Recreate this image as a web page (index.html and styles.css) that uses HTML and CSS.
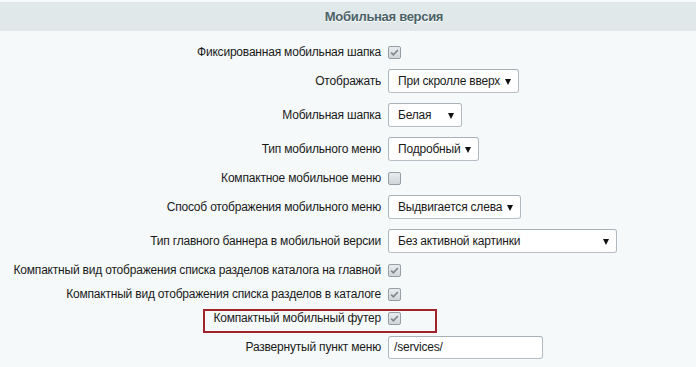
FILE: index.html
```html
<!DOCTYPE html>
<html lang="ru">

<head>
  <meta charset="UTF-8">
  <meta name="viewport" content="width=device-width, initial-scale=1.0">
  <title>Мобильная версия</title>
  <link rel="stylesheet" href="styles.css">
</head>

<body>
  <div class="section">
    <div class="heading">Мобильная версия</div>

    <div class="fields">
      <div class="row row-check">
        <label class="field-label">Фиксированная мобильная шапка</label>
        <div class="field-control">
          <span class="checkbox">
            <svg width="13" height="13" viewBox="0 0 13 13"><path d="M3.2 6.6 L5.4 8.8 L9.9 4" /></svg>
          </span>
        </div>
      </div>

      <div class="row">
        <label class="field-label">Отображать</label>
        <div class="field-control">
          <div class="select" style="width: 131px"><span>При скролле вверх</span></div>
        </div>
      </div>

      <div class="row">
        <label class="field-label">Мобильная шапка</label>
        <div class="field-control">
          <div class="select" style="width: 74px"><span>Белая</span></div>
        </div>
      </div>

      <div class="row">
        <label class="field-label">Тип мобильного меню</label>
        <div class="field-control">
          <div class="select" style="width: 91px"><span>Подробный</span></div>
        </div>
      </div>

      <div class="row row-check">
        <label class="field-label">Компактное мобильное меню</label>
        <div class="field-control">
          <span class="checkbox"></span>
        </div>
      </div>

      <div class="row">
        <label class="field-label">Способ отображения мобильного меню</label>
        <div class="field-control">
          <div class="select" style="width: 133px"><span>Выдвигается слева</span></div>
        </div>
      </div>

      <div class="row">
        <label class="field-label">Тип главного баннера в мобильной версии</label>
        <div class="field-control">
          <div class="select" style="width: 229px"><span>Без активной картинки</span></div>
        </div>
      </div>

      <div class="row row-check">
        <label class="field-label">Компактный вид отображения списка разделов каталога на главной</label>
        <div class="field-control">
          <span class="checkbox">
            <svg width="13" height="13" viewBox="0 0 13 13"><path d="M3.2 6.6 L5.4 8.8 L9.9 4" /></svg>
          </span>
        </div>
      </div>

      <div class="row row-check">
        <label class="field-label">Компактный вид отображения списка разделов в каталоге</label>
        <div class="field-control">
          <span class="checkbox">
            <svg width="13" height="13" viewBox="0 0 13 13"><path d="M3.2 6.6 L5.4 8.8 L9.9 4" /></svg>
          </span>
        </div>
      </div>

      <div class="row row-check highlighted">
        <label class="field-label">Компактный мобильный футер</label>
        <div class="field-control">
          <span class="checkbox">
            <svg width="13" height="13" viewBox="0 0 13 13"><path d="M3.2 6.6 L5.4 8.8 L9.9 4" /></svg>
          </span>
        </div>
      </div>

      <div class="row">
        <label class="field-label">Развернутый пункт меню</label>
        <div class="field-control">
          <input type="text" class="text-input" value="/services/">
        </div>
      </div>
    </div>
  </div>
</body>

</html>
```

FILE: styles.css
```css
    body {
      margin: 0;
      font-family: "Liberation Sans", Arial, sans-serif;
      font-size: 12px;
      letter-spacing: -0.2px;
      color: #1a1a1a;
      background-color: #f5f9f9;
    }

    .section {
      padding-top: 2px;
    }

    .heading {
      height: 29px;
      line-height: 29px;
      padding-left: 72px;
      text-align: center;
      font-size: 13px;
      font-weight: bold;
      letter-spacing: -0.3px;
      color: #4b6267;
      text-shadow: 0 1px #fff;
      background-color: #e0e8ea;
    }

    .fields {
      margin-top: 9px;
    }

    .row {
      display: grid;
      grid-template-columns: 381px 1fr;
      column-gap: 7px;
      align-items: center;
      height: 34px;
    }

    .row-check {
      height: 24px;
    }

    .highlighted {
      position: relative;
    }

    .highlighted::after {
      content: "";
      position: absolute;
      left: 203px;
      top: 3px;
      width: 234px;
      height: 24px;
      box-sizing: border-box;
      border: 2px solid #a3232b;
    }

    .field-label {
      justify-self: end;
      text-align: right;
      white-space: nowrap;
    }

    .field-control {
      display: flex;
      align-items: center;
    }

    .checkbox {
      display: inline-block;
      width: 13px;
      height: 13px;
      box-sizing: border-box;
      border: 1px solid #959ea5;
      border-radius: 2px;
      background: linear-gradient(#e9ecee, #cfd5d8);
      position: relative;
    }

    .checkbox svg {
      position: absolute;
      left: -1px;
      top: -1px;
    }

    .checkbox path {
      fill: none;
      stroke: #7c858b;
      stroke-width: 1.6;
    }

    .select {
      position: relative;
      height: 24px;
      line-height: 22px;
      box-sizing: border-box;
      padding-left: 9px;
      border: 1px solid;
      border-color: #a8b0b8 #b0b8c0 #b8bec6 #b0b8c0;
      border-radius: 3px;
      background: #fff;
      white-space: nowrap;
    }

    .select::after {
      content: "";
      position: absolute;
      right: 7px;
      top: 9px;
      border-left: 3.5px solid transparent;
      border-right: 3.5px solid transparent;
      border-top: 6px solid #111;
    }

    .text-input {
      width: 155px;
      height: 23px;
      box-sizing: border-box;
      padding: 0 5px;
      border: 1px solid;
      border-color: #a8b0b8 #b0b8c0 #b8bec6 #b0b8c0;
      border-radius: 3px;
      font-family: "Liberation Sans", Arial, sans-serif;
      font-size: 12px;
      letter-spacing: -0.2px;
      color: #1a1a1a;
      background: #fff;
    }
```
